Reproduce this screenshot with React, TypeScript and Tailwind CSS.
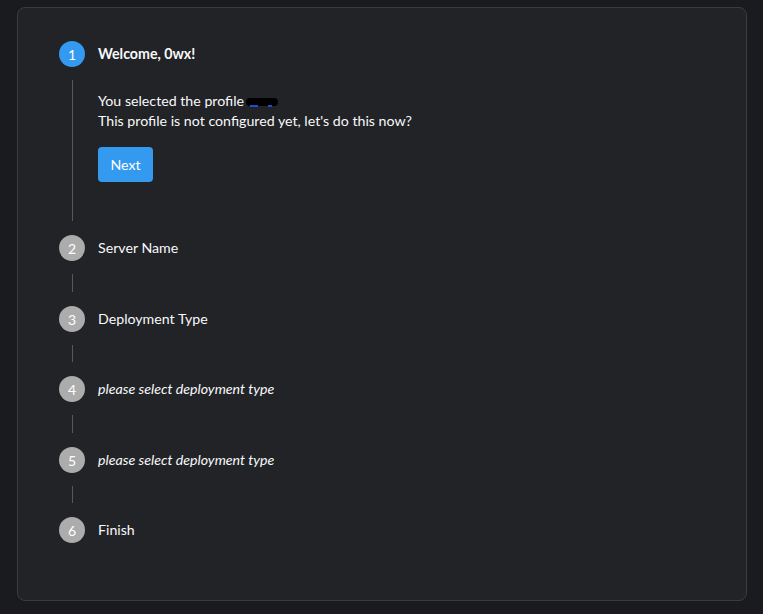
import React from "react";

const font = { fontFamily: "Lato, 'Open Sans', sans-serif" };

function Circle({ n, active }: { n: number; active?: boolean }) {
  return (
    <div
      className={
        "w-[26px] h-[26px] rounded-full flex items-center justify-center text-[14px] text-white shrink-0 " +
        (active ? "bg-[#339af0]" : "bg-[#acacac]")
      }
    >
      {n}
    </div>
  );
}

function Step({
  n,
  label,
  active,
  italic,
  bold,
  last,
  children,
  pb,
}: {
  n: number;
  label: string;
  active?: boolean;
  italic?: boolean;
  bold?: boolean;
  last?: boolean;
  children?: React.ReactNode;
  pb: string;
}) {
  return (
    <div className="flex">
      <div className="flex flex-col items-center w-[26px]">
        <Circle n={n} active={active} />
        {!last && <div className="flex-1 w-px bg-[#55585e] mt-[13px] mb-[14px]" />}
      </div>
      <div className={"flex flex-col pl-[13px] " + pb}>
        <div
          className={
            "h-[26px] flex items-center text-[14.2px] text-[#f8f9fa] " +
            (italic ? "italic " : "") +
            (bold ? "font-bold" : "")
          }
        >
          {label}
        </div>
        {children}
      </div>
    </div>
  );
}

export default function App() {
  return (
    <div className="w-[763px] h-[614px] bg-[#1a1b1e] pt-[7px] pl-[17px]" style={font}>
      <div className="w-[730px] h-[594px] bg-[#222327] border border-[#3a3c42] rounded-[8px] pt-[33px] pl-[41px]">
        <Step n={1} label="Welcome, 0wx!" active bold pb="pb-[53px]">
          <div className="mt-[24px] text-[14.2px] leading-[20px] text-[#f8f9fa]">
            <div className="flex items-center">
              You selected the profile
              <span className="relative inline-block ml-[2px] w-[32px] h-[8px] rounded-full bg-black mt-[2px]">
                <span className="absolute left-[4px] top-[7px] w-[8px] h-[2px] bg-[#1c4fd0]" />
                <span className="absolute left-[22px] top-[7px] w-[4px] h-[2px] bg-[#1c4fd0]" />
              </span>
            </div>
            <div>This profile is not configured yet, let's do this now?</div>
          </div>
          <div className="mt-[16px]">
            <button className="h-[35px] w-[55px] rounded-[4px] bg-[#339af0] text-white text-[14.2px]">
              Next
            </button>
          </div>
        </Step>
        <Step n={2} label="Server Name" pb="pb-[45px]" />
        <Step n={3} label="Deployment Type" pb="pb-[44px]" />
        <Step n={4} label="please select deployment type" italic pb="pb-[45px]" />
        <Step n={5} label="please select deployment type" italic pb="pb-[44px]" />
        <Step n={6} label="Finish" last pb="pb-0" />
      </div>
    </div>
  );
}
